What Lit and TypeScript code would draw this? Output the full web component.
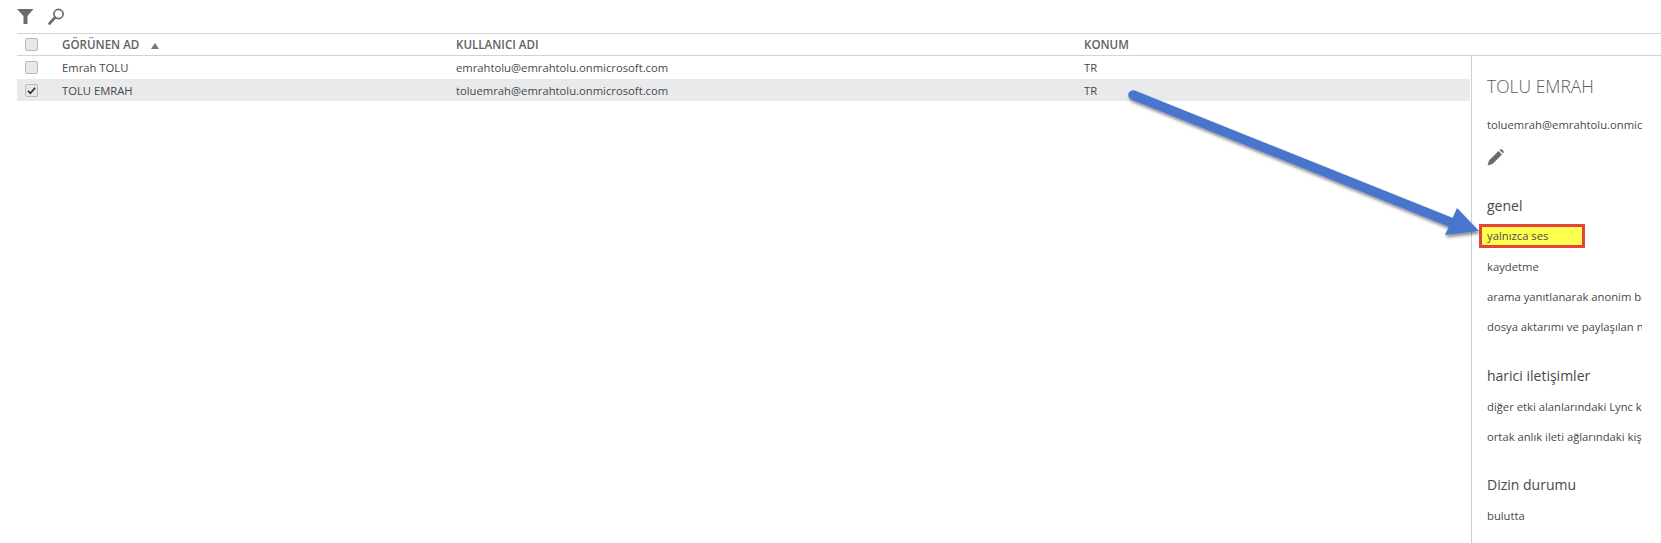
import { LitElement, html, css, svg } from "lit";
import { customElement } from "lit/decorators.js";

const checkbox = (checked: boolean) => html`<span class="cb">${checked
  ? html`<svg viewBox="0 0 12 12" width="11" height="11"><path d="M2.2 6.4 L4.8 9 L10 3" fill="none" stroke="#333" stroke-width="2"/></svg>`
  : ""}</span>`;

@customElement("app-root")
export class AppRoot extends LitElement {
  static styles = css`
    :host { display: block; width: 1661px; height: 543px; position: relative; overflow: hidden; background: #fff;
      font-family: "Open Sans", "Noto Sans", sans-serif; color: #484848; font-size: 11.25px; }
    .toolbar { height: 33px; display: flex; align-items: center; gap: 14px; padding-left: 17px; box-sizing: border-box; }
    .toolbar svg { display: block; }
    .cols { display: grid; grid-template-columns: 45px 394px 628px 1fr; align-items: center; margin-left: 17px; }
    .head { border-top: 1px solid #d0d4d4; border-bottom: 1px solid #d0d4d4; height: 21px; font-size: 11.6px; font-weight: 600; color: #626262; }
    .head .c { display: flex; align-items: center; }
    .sort { width: 0; height: 0; border-left: 4px solid transparent; border-right: 4px solid transparent; border-bottom: 6px solid #777; margin-left: 12px; margin-top: 2px; }
    .cb { width: 11px; height: 11px; border: 1px solid #b8b8b8; border-radius: 2px; background: #e8e8e8; margin-left: 8px; display: flex; align-items: center; justify-content: center; }
    .main { display: flex; height: 487px; }
    .list { width: 1471px; }
    .row { height: 22px; margin-left: 17px; margin-right: 1px; }
    .row.first { height: 23px; }
    .row.sel { background: #e9eaec; }
    .panel { border-left: 1px solid #ccd0d6; padding-left: 15px; width: 155px; overflow: hidden; white-space: nowrap; }
    .title { font-size: 17.5px; font-weight: 300; height: 24px; line-height: 24px; margin-top: 18px; color: #5c5c5c; }
    .item { height: 30px; line-height: 30px; }
    .email { margin-top: 12px; }
    .pencil { display: block; margin-top: 9px; }
    h3 { font-weight: 400; font-size: 14px; color: #484848; margin: 0; height: 24px; line-height: 24px; }
    .s1 { margin-top: 28px; }
    .s2 { margin-top: 22px; margin-bottom: 4px; }
    .s3 { margin-top: 21px; margin-bottom: 4px; }
    .mark { height: 24px; line-height: 18px; box-sizing: border-box; width: 106px; margin-left: -8px; margin-top: 6px; margin-bottom: 4px; padding-left: 5px; background: #ffff4d; border: 3px solid #e8423e; }
    .overlay { position: absolute; left: 0; top: 0; pointer-events: none; }
  `;

  render() {
    return html`
      <div class="toolbar">
        <svg width="17" height="15" viewBox="0 0 17 15"><path d="M0 0 H16.5 L10.5 7 V15 H6.5 V7 Z" fill="#6b6b6b"/></svg>
        <svg width="17" height="17" viewBox="0 0 17 17"><circle cx="10.5" cy="6" r="4.6" fill="none" stroke="#6b6b6b" stroke-width="1.7"/><path d="M7 9.5 L1.5 15.5" stroke="#6b6b6b" stroke-width="2.6" stroke-linecap="round"/></svg>
      </div>
      <div class="cols head">
        ${checkbox(false)}
        <div class="c">GÖRÜNEN AD<span class="sort"></span></div>
        <div>KULLANICI ADI</div>
        <div>KONUM</div>
      </div>
      <div class="main">
        <div class="list">
          <div class="cols row first">${checkbox(false)}<div>Emrah TOLU</div><div>emrahtolu@emrahtolu.onmicrosoft.com</div><div>TR</div></div>
          <div class="cols row sel">${checkbox(true)}<div>TOLU EMRAH</div><div>toluemrah@emrahtolu.onmicrosoft.com</div><div>TR</div></div>
        </div>
        <div class="panel">
          <div class="title">TOLU EMRAH</div>
          <div class="item email">toluemrah@emrahtolu.onmic</div>
          <svg class="pencil" width="17" height="17" viewBox="0 0 17 17"><path d="M0.5 16.5 L2 11.5 L11.5 2 L15 5.5 L5.5 15 Z M12.5 1 L13.5 0.3 Q14.2 0 15 0.6 L16.4 2 Q17 2.8 16.6 3.6 L16 4.5 Z" fill="#6b6b6b"/></svg>
          <h3 class="s1">genel</h3>
          <div class="mark">yalnızca ses</div>
          <div class="item">kaydetme</div>
          <div class="item">arama yanıtlanarak anonim ba</div>
          <div class="item">dosya aktarımı ve paylaşılan n</div>
          <h3 class="s2">harici iletişimler</h3>
          <div class="item">diğer etki alanlarındaki Lync k</div>
          <div class="item">ortak anlık ileti ağlarındaki kiş</div>
          <h3 class="s3">Dizin durumu</h3>
          <div class="item">bulutta</div>
        </div>
      </div>
      <svg class="overlay" width="1661" height="543">
        <defs><filter id="sh" x="-10%" y="-10%" width="120%" height="130%"><feDropShadow dx="1" dy="2.5" stdDeviation="1.8" flood-color="#000" flood-opacity="0.45"/></filter></defs>
        ${svg`<g filter="url(#sh)"><path d="M1133 95 L1455 224" stroke="#4a76cc" stroke-width="9.5" stroke-linecap="round" fill="none"/><path d="M1457 208 L1479 231 L1445 235 Z" fill="#4a76cc"/></g>`}
      </svg>
    `;
  }
}
